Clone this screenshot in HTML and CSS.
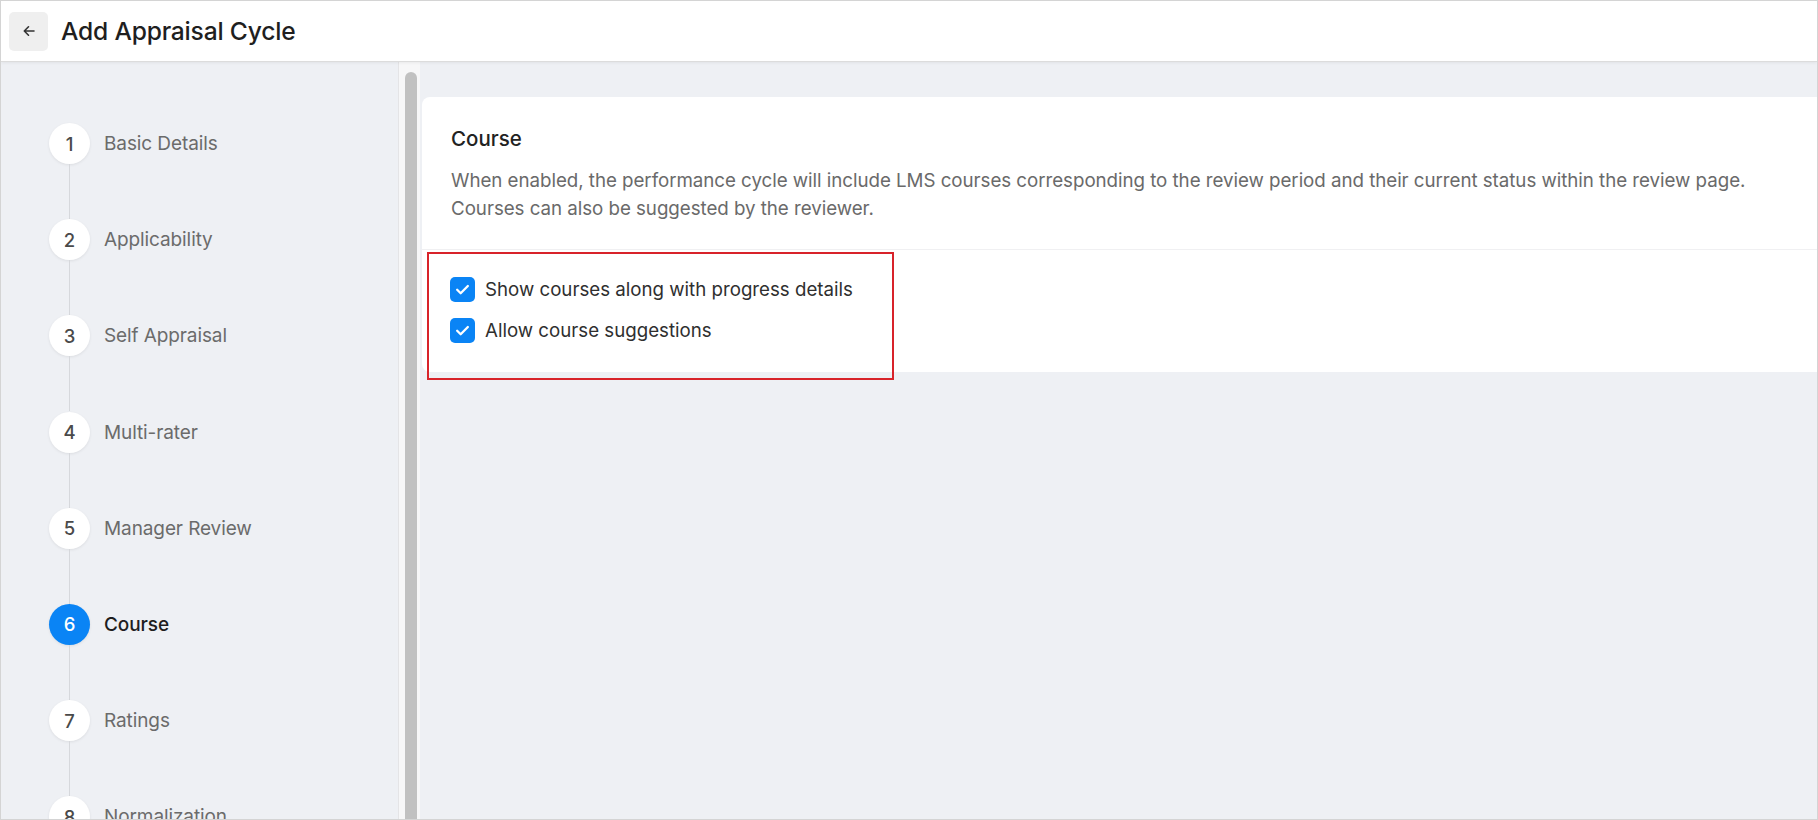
FILE: index.html
```html
<!DOCTYPE html>
<html lang="en">
<head>
<meta charset="utf-8">
<title>Add Appraisal Cycle</title>
<link rel="stylesheet" href="styles.css">
</head>
<body>
<div class="frame">
  <header class="topbar">
    <button class="back-btn" aria-label="Back">
      <svg width="16" height="16" viewBox="0 0 16 16" fill="none" stroke="#333" stroke-width="1.6" stroke-linecap="round" stroke-linejoin="round"><path d="M13 8H3.5M7.5 3.8L3.3 8l4.2 4.2"/></svg>
    </button>
    <h1 class="page-title">Add Appraisal Cycle</h1>
  </header>
  <div class="workspace">
    <nav class="stepper">
      <ol class="steps">
        <li class="step"><span class="step-num">1</span><span class="step-label">Basic Details</span></li>
        <li class="step"><span class="step-num">2</span><span class="step-label">Applicability</span></li>
        <li class="step"><span class="step-num">3</span><span class="step-label">Self Appraisal</span></li>
        <li class="step"><span class="step-num">4</span><span class="step-label">Multi-rater</span></li>
        <li class="step"><span class="step-num">5</span><span class="step-label">Manager Review</span></li>
        <li class="step active"><span class="step-num">6</span><span class="step-label">Course</span></li>
        <li class="step"><span class="step-num">7</span><span class="step-label">Ratings</span></li>
        <li class="step"><span class="step-num">8</span><span class="step-label">Normalization</span></li>
      </ol>
    </nav>
    <div class="scroll-track"><div class="scroll-thumb"></div></div>
    <main class="main">
      <section class="card">
        <div class="card-head">
          <h2 class="card-title">Course</h2>
          <p class="card-desc">When enabled, the performance cycle will include LMS courses corresponding to the review period and their current status within the review page.<br>Courses can also be suggested by the reviewer.</p>
        </div>
        <div class="card-body">
          <label class="check-row">
            <span class="checkbox"><svg width="17" height="17" viewBox="0 0 14 14" fill="none" stroke="#fff" stroke-width="1.9" stroke-linecap="round" stroke-linejoin="round"><path d="M2.6 7.2l2.9 2.9 5.9-6"/></svg></span>
            <span class="check-text">Show courses along with progress details</span>
          </label>
          <label class="check-row">
            <span class="checkbox"><svg width="17" height="17" viewBox="0 0 14 14" fill="none" stroke="#fff" stroke-width="1.9" stroke-linecap="round" stroke-linejoin="round"><path d="M2.6 7.2l2.9 2.9 5.9-6"/></svg></span>
            <span class="check-text">Allow course suggestions</span>
          </label>
        </div>
        <div class="highlight"></div>
      </section>
    </main>
  </div>
</div>
</body>
</html>
```
FILE: styles.css
```css
* { box-sizing: border-box; }
html, body { margin: 0; padding: 0; }
body {
  font-family: "Inter", "Noto Sans", sans-serif;
  background: #fff;
  width: 1818px;
  height: 820px;
  overflow: hidden;
}
.frame {
  width: 1818px;
  height: 820px;
  border: 1px solid #d4d4d4;
  display: flex;
  flex-direction: column;
  background: #eef0f4;
  overflow: hidden;
}
.topbar {
  height: 61px;
  flex: none;
  background: #fff;
  border-bottom: 1px solid #dcdcdc;
  box-shadow: 0 1px 3px rgba(0,0,0,0.06);
  display: flex;
  align-items: center;
  padding-left: 8px;
  gap: 13px;
  position: relative;
  z-index: 2;
}
.back-btn {
  width: 39px;
  height: 39px;
  border: none;
  border-radius: 5px;
  background: #efefef;
  display: flex;
  align-items: center;
  justify-content: center;
  padding: 0;
}
.page-title {
  margin: 0;
  font-size: 24.6px;
  font-weight: 500;
  color: #1f1f1f;
  letter-spacing: -0.2px;
}
.workspace {
  flex: 1;
  display: flex;
  min-height: 0;
}
.stepper {
  width: 397px;
  flex: none;
  background: #eef0f4;
  padding: 61px 0 0 48px;
}
.steps {
  list-style: none;
  margin: 0;
  padding: 0;
}
.step {
  display: flex;
  align-items: center;
  height: 41px;
  margin-bottom: 55.2px;
  gap: 14px;
  position: relative;
}
.step::after {
  content: "";
  position: absolute;
  left: 20px;
  top: 41px;
  width: 1px;
  height: 55px;
  background: #d6d8dc;
}
.step:last-child::after { display: none; }
.step-num {
  width: 41px;
  height: 41px;
  border-radius: 50%;
  background: #fff;
  box-shadow: 0 1px 3px rgba(0,0,0,0.08);
  display: flex;
  align-items: center;
  justify-content: center;
  font-size: 18.5px;
  font-weight: 500;
  color: #4a4a4a;
  flex: none;
}
.step-label {
  font-size: 19px;
  color: #6b6b6b;
  letter-spacing: -0.1px;
}
.step.active .step-num {
  background: #0a84f5;
  color: #fff;
}
.step.active .step-label {
  color: #1e1e1e;
  font-weight: 500;
}
.scroll-track {
  width: 22px;
  flex: none;
  background: #f7f7f8;
  border-left: 1px solid #e4e4e6;
  padding: 10px 0 0 6px;
}
.scroll-thumb {
  width: 12px;
  height: 100%;
  background: #c1c1c1;
  border-radius: 6px 6px 0 0;
}
.main {
  flex: 1;
  padding: 35px 0 0 2px;
  min-width: 0;
}
.card {
  background: #fff;
  border-radius: 8px 0 0 8px;
  position: relative;
}
.card-head {
  padding: 30px 28px 26px 29px;
  border-bottom: 1px solid #f0f0f2;
}
.card-title {
  margin: 0 0 16px;
  font-size: 20.5px;
  line-height: 24px;
  font-weight: 500;
  color: #222;
}
.card-desc {
  margin: 0;
  font-size: 18.75px;
  line-height: 28px;
  color: #6a6a6a;
  letter-spacing: -0.05px;
}
.card-body {
  padding: 27px 29px 29px 28px;
  display: flex;
  flex-direction: column;
  gap: 16px;
}
.check-row {
  display: flex;
  align-items: center;
  gap: 10px;
  height: 25px;
}
.checkbox {
  width: 25px;
  height: 25px;
  border-radius: 5px;
  background: #0a84f5;
  display: flex;
  align-items: center;
  justify-content: center;
  flex: none;
}
.check-text {
  font-size: 18.7px;
  color: #2f2f2f;
}
.highlight {
  position: absolute;
  left: 5px;
  top: 155px;
  width: 467px;
  height: 128px;
  border: 2px solid #d8232a;
  pointer-events: none;
}
```
